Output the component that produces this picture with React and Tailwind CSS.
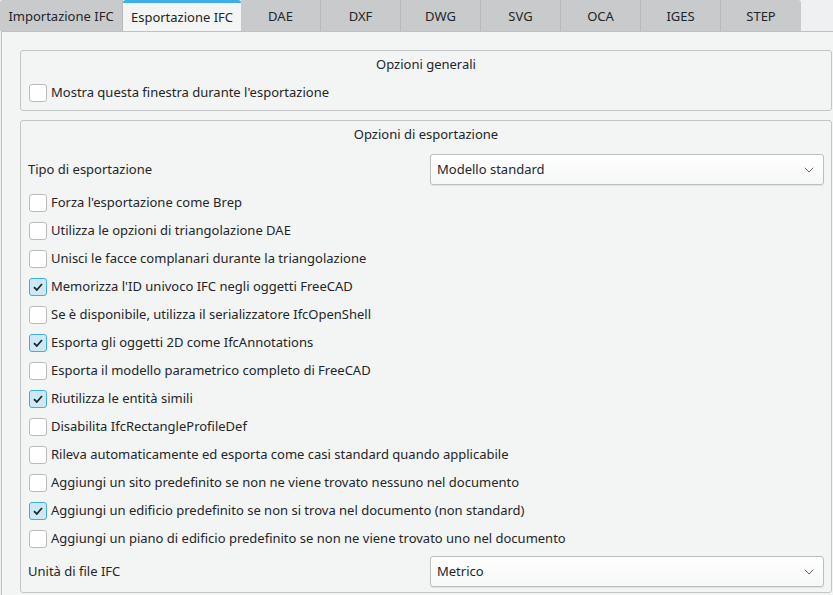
import { ChevronDown } from "lucide-react";

const tabs = ["Importazione IFC", "Esportazione IFC", "DAE", "DXF", "DWG", "SVG", "OCA", "IGES", "STEP"];

const options = [
  ["Forza l'esportazione come Brep", false],
  ["Utilizza le opzioni di triangolazione DAE", false],
  ["Unisci le facce complanari durante la triangolazione", false],
  ["Memorizza l'ID univoco IFC negli oggetti FreeCAD", true],
  ["Se è disponibile, utilizza il serializzatore IfcOpenShell", false],
  ["Esporta gli oggetti 2D come IfcAnnotations", true],
  ["Esporta il modello parametrico completo di FreeCAD", false],
  ["Riutilizza le entità simili", true],
  ["Disabilita IfcRectangleProfileDef", false],
  ["Rileva automaticamente ed esporta come casi standard quando applicabile", false],
  ["Aggiungi un sito predefinito se non ne viene trovato nessuno nel documento", false],
  ["Aggiungi un edificio predefinito se non si trova nel documento (non standard)", true],
  ["Aggiungi un piano di edificio predefinito se non ne viene trovato uno nel documento", false],
];

function Checkbox({ checked }) {
  if (checked) {
    return (
      <span className="flex h-[18px] w-[18px] items-center justify-center rounded-[3px] border border-[#3daee9] bg-[#cde8f6]">
        <svg width="12" height="12" viewBox="0 0 12 12">
          <path d="M2 6.2 L4.8 9 L10 3" fill="none" stroke="#232629" strokeWidth="1.8" />
        </svg>
      </span>
    );
  }
  return <span className="h-[18px] w-[18px] rounded-[3px] border border-[#b9bbbd] bg-white" />;
}

function CheckRow({ label, checked }) {
  return (
    <div className="flex h-[28px] items-center gap-[4px] pl-[8px]">
      <Checkbox checked={checked} />
      <span>{label}</span>
    </div>
  );
}

function Combo({ value }) {
  return (
    <div className="flex h-[31px] w-[394px] items-center justify-between rounded-[3px] border border-[#bcbec0] bg-gradient-to-b from-white to-[#f6f7f7] pl-[6px] pr-[6px] shadow-[0_1px_1px_rgba(0,0,0,0.08)]">
      <span>{value}</span>
      <ChevronDown size={16} strokeWidth={1.3} className="text-[#4d4f51]" />
    </div>
  );
}

export default function App() {
  return (
    <div
      className="h-[595px] w-[833px] overflow-hidden bg-[#eff0f1] text-[13px] text-[#232629]"
      style={{ fontFamily: '"Noto Sans", "DejaVu Sans", sans-serif' }}
    >
      <div className="flex h-[31px]">
        {tabs.map((t, i) =>
          i === 1 ? (
            <div
              key={t}
              className="flex w-[118px] items-center justify-center rounded-t-[3px] border-t-[3px] border-[#3daee9] bg-[#f3f4f4] pt-[1px]"
            >
              {t}
            </div>
          ) : (
            <div
              key={t}
              className={
                "flex items-center justify-center border-r border-[#b8b9ba] bg-[#c9cacb] pt-[2px] " +
                (i === 0 ? "w-[123px] rounded-tl-[3px]" : "w-[80px]") +
                (i === 8 ? " rounded-tr-[3px] border-r-0" : "")
              }
            >
              {t}
            </div>
          )
        )}
      </div>

      <div className="ml-px h-[564px] border-l border-t border-[#bfc1c2] bg-[#f3f4f4] pl-[18px] pt-[18px]">
        <div className="flex h-[61px] w-[812px] flex-col rounded-[3px] border border-[#c3c5c6]">
          <div className="flex h-[28px] items-center justify-center">Opzioni generali</div>
          <CheckRow label="Mostra questa finestra durante l'esportazione" checked={false} />
        </div>

        <div className="mt-[9px] flex h-[473px] w-[812px] flex-col rounded-[3px] border border-[#c3c5c6]">
          <div className="flex h-[27px] items-center justify-center">Opzioni di esportazione</div>
          <div className="mt-[6px] flex h-[31px] items-center justify-between pl-[7px] pr-[7px]">
            <span>Tipo di esportazione</span>
            <Combo value="Modello standard" />
          </div>
          <div className="mt-[4px] flex flex-col">
            {options.map(([label, checked]) => (
              <CheckRow key={label} label={label} checked={checked} />
            ))}
          </div>
          <div className="mt-[3px] flex h-[31px] items-center justify-between pl-[7px] pr-[7px]">
            <span>Unità di file IFC</span>
            <Combo value="Metrico" />
          </div>
        </div>
      </div>
    </div>
  );
}
